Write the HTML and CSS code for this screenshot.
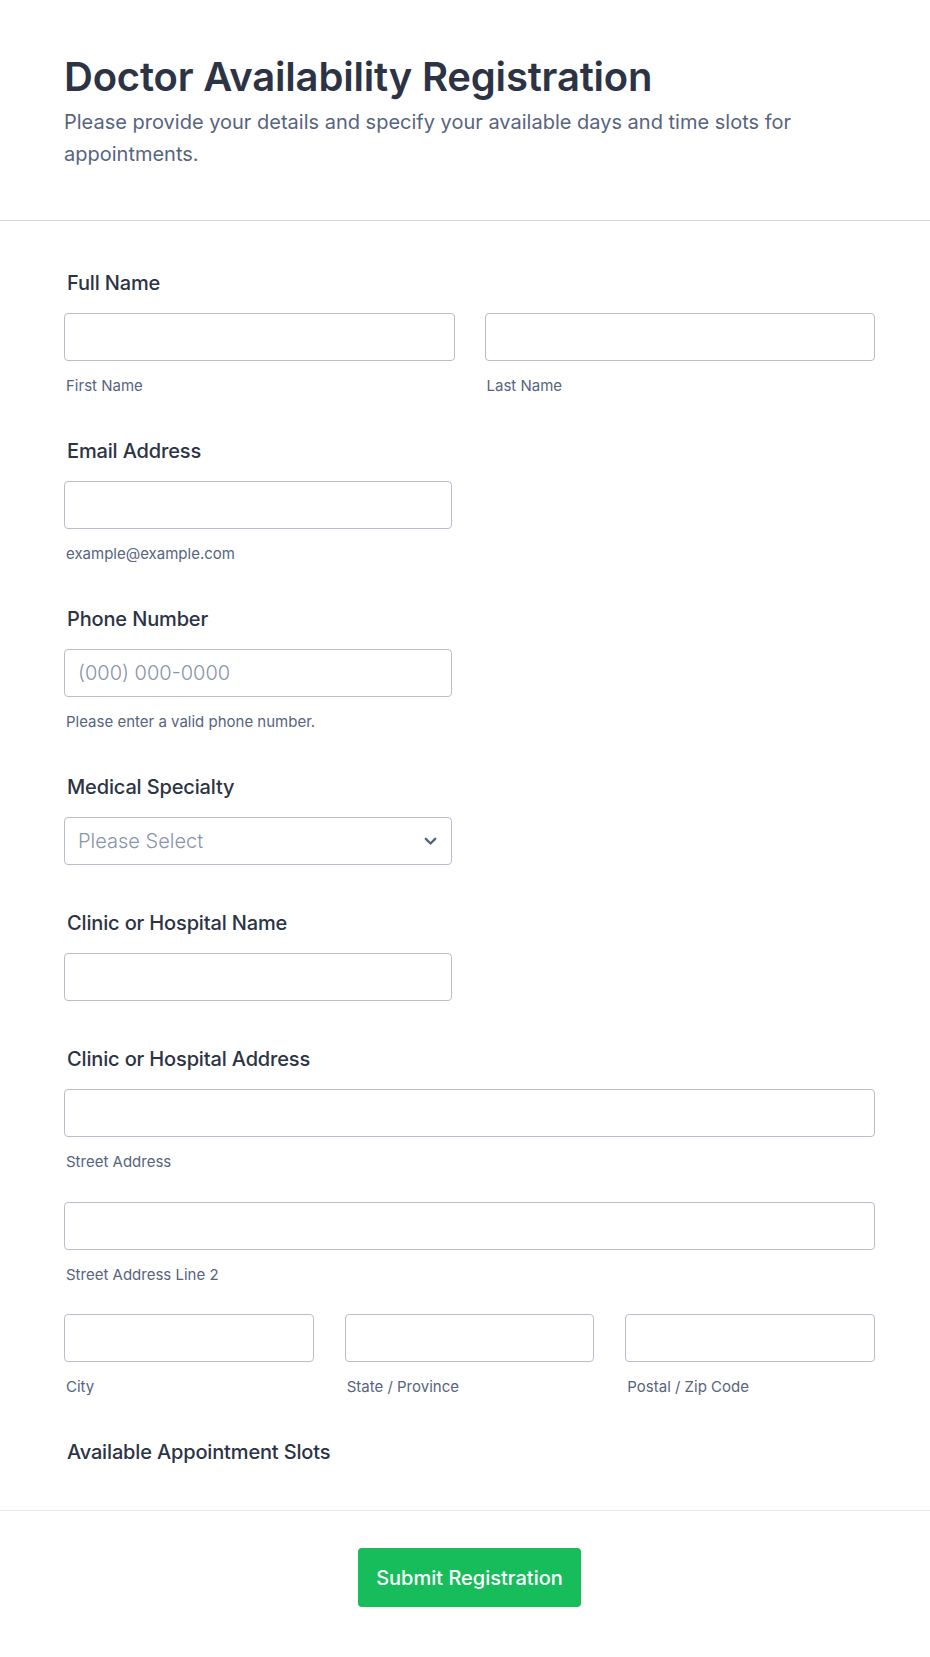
FILE: index.html
```html
<!DOCTYPE html>
<html lang="en">
<head>
<meta charset="utf-8">
<title>Doctor Availability Registration</title>
<link rel="stylesheet" href="styles.css">
</head>
<body>
<div class="page">
  <header class="header">
    <h1 class="title">Doctor Availability Registration</h1>
    <p class="subtitle">Please provide your details and specify your available days and time slots for appointments.</p>
  </header>

  <form class="form">
    <div class="field">
      <label class="label">Full Name</label>
      <div class="row row--2">
        <div class="col">
          <input class="input" type="text">
          <span class="sublabel">First Name</span>
        </div>
        <div class="col">
          <input class="input" type="text">
          <span class="sublabel">Last Name</span>
        </div>
      </div>
    </div>

    <div class="field">
      <label class="label">Email Address</label>
      <div class="half">
        <input class="input" type="email">
        <span class="sublabel">example@example.com</span>
      </div>
    </div>

    <div class="field">
      <label class="label">Phone Number</label>
      <div class="half">
        <input class="input" type="tel" placeholder="(000) 000-0000">
        <span class="sublabel">Please enter a valid phone number.</span>
      </div>
    </div>

    <div class="field field--plain">
      <label class="label">Medical Specialty</label>
      <div class="half select">
        <span class="select-text">Please Select</span>
        <svg class="chevron" width="13" height="9" viewBox="0 0 13 9"><path d="M1.8 1.8 L6.5 6.5 L11.2 1.8" fill="none" stroke="#57647e" stroke-width="2.4" stroke-linecap="round" stroke-linejoin="round"/></svg>
      </div>
    </div>

    <div class="field field--plain">
      <label class="label">Clinic or Hospital Name</label>
      <div class="half">
        <input class="input" type="text">
      </div>
    </div>

    <div class="field">
      <label class="label">Clinic or Hospital Address</label>
      <div class="addr">
        <div class="col">
          <input class="input" type="text">
          <span class="sublabel">Street Address</span>
        </div>
        <div class="col">
          <input class="input" type="text">
          <span class="sublabel">Street Address Line 2</span>
        </div>
        <div class="row row--3">
          <div class="col">
            <input class="input" type="text">
            <span class="sublabel">City</span>
          </div>
          <div class="col">
            <input class="input" type="text">
            <span class="sublabel">State / Province</span>
          </div>
          <div class="col">
            <input class="input" type="text">
            <span class="sublabel">Postal / Zip Code</span>
          </div>
        </div>
      </div>
    </div>

    <div class="field field--last">
      <label class="label">Available Appointment Slots</label>
    </div>
  </form>

  <footer class="footer">
    <button class="submit" type="button">Submit Registration</button>
  </footer>
</div>
</body>
</html>
```

FILE: styles.css
```css
* { box-sizing: border-box; }

html, body {
  margin: 0;
  padding: 0;
  background: #ffffff;
}

body {
  font-family: Inter, "Noto Sans", Arial, sans-serif;
  color: #2c3345;
}

.page {
  width: 930px;
}

.header {
  padding: 53px 55px 50px 64px;
  border-bottom: 1px solid #d3d6de;
}

.title {
  margin: 0;
  font-size: 40px;
  line-height: 48px;
  font-weight: 600;
  color: #2c3345;
  letter-spacing: -0.2px;
}

.subtitle {
  margin: 5px 0 0;
  font-size: 20px;
  line-height: 32px;
  font-weight: 400;
  color: #57647e;
}

.form {
  padding: 50px 55px 0 64px;
  border-bottom: 1px solid #e3e6ec;
}

.field {
  display: flex;
  flex-direction: column;
  margin-bottom: 42px;
}

.field--plain {
  margin-bottom: 46px;
}

.field--last {
  margin-bottom: 46px;
}

.label {
  display: block;
  padding-left: 3px;
  font-size: 20px;
  line-height: 24px;
  font-weight: 500;
  letter-spacing: -0.15px;
  color: #2c3345;
  margin-bottom: 18px;
}

.field--last .label {
  margin-bottom: 0;
}

.row {
  display: grid;
  column-gap: 30px;
}

.row--2 { grid-template-columns: 1fr 1fr; }
.row--3 { grid-template-columns: 1fr 1fr 1fr; column-gap: 31px; }

.col {
  display: flex;
  flex-direction: column;
}

.half {
  width: 388px;
  display: flex;
  flex-direction: column;
}

.addr {
  display: flex;
  flex-direction: column;
  row-gap: 28.5px;
}

.input {
  display: block;
  width: 100%;
  height: 48px;
  margin: 0;
  padding: 0 13px;
  border: 1px solid #b8bdc9;
  border-radius: 4px;
  background: #ffffff;
  font-family: Inter, "Noto Sans", Arial, sans-serif;
  font-size: 20px;
  font-weight: 300;
  color: #2c3345;
  outline: none;
}

.input::placeholder {
  color: #8894ab;
}

.sublabel {
  display: block;
  margin-top: 14px;
  padding-left: 2px;
  font-size: 15px;
  line-height: 22px;
  color: #57647e;
}

.select {
  height: 48px;
  flex-direction: row;
  align-items: center;
  justify-content: space-between;
  padding: 0 14px 0 13px;
  border: 1px solid #b8bdc9;
  border-radius: 4px;
}

.select-text {
  font-size: 20px;
  font-weight: 300;
  color: #8894ab;
}

.chevron {
  display: block;
}

.footer {
  display: flex;
  justify-content: center;
  padding: 37px 55px 50px 64px;
}

.submit {
  width: 223px;
  height: 59px;
  border: none;
  border-radius: 4px;
  background: #18bd5b;
  color: #ffffff;
  font-family: Inter, "Noto Sans", Arial, sans-serif;
  font-size: 20px;
  font-weight: 500;
  cursor: pointer;
}
```
